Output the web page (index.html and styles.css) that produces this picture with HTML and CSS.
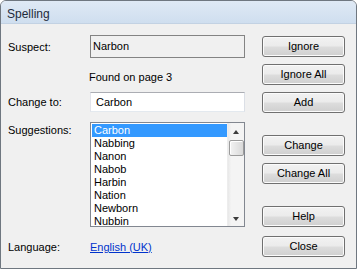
FILE: index.html
```html
<!DOCTYPE html>
<html>
<head>
<meta charset="utf-8">
<link rel="stylesheet" href="styles.css">
</head>
<body>
<div class="window">
  <div class="titlebar">Spelling</div>
  <div class="client">
    <div class="left">
      <div class="row row-suspect">
        <span class="label">Suspect:</span>
        <div class="static">Narbon</div>
      </div>
      <div class="row row-found">Found on page 3</div>
      <div class="row row-change">
        <span class="label">Change to:</span>
        <div class="input">Carbon</div>
      </div>
      <div class="row row-sugg">
        <span class="label label-top">Suggestions:</span>
        <div class="listbox">
          <ul class="items">
            <li class="sel">Carbon</li>
            <li>Nabbing</li>
            <li>Nanon</li>
            <li>Nabob</li>
            <li>Harbin</li>
            <li>Nation</li>
            <li>Newborn</li>
            <li>Nubbin</li>
          </ul>
          <div class="scrollbar">
            <div class="arrow up"></div>
            <div class="thumb"></div>
            <div class="track"></div>
            <div class="arrow down"></div>
          </div>
        </div>
      </div>
      <div class="row row-lang">
        <span class="label">Language:</span>
        <a class="link" href="#">English (UK)</a>
      </div>
    </div>
    <div class="right">
      <div class="btn b-ignore">Ignore</div>
      <div class="btn b-ignoreall">Ignore All</div>
      <div class="btn b-add">Add</div>
      <div class="btn b-change">Change</div>
      <div class="btn b-changeall">Change All</div>
      <div class="btn b-help">Help</div>
      <div class="btn b-close">Close</div>
    </div>
  </div>
</div>
</body>
</html>
```
FILE: styles.css
```css
* { box-sizing: border-box; }
html, body { margin: 0; padding: 0; background: #ffffff; }
body { width: 357px; height: 269px; overflow: hidden; }

.window {
  width: 357px;
  height: 269px;
  border: 1px solid #6f7780;
  border-radius: 6px 6px 0 0;
  background: #f0f0f0;
  overflow: hidden;
  font-family: "Liberation Sans", Arial, sans-serif;
  font-size: 11px;
  color: #000;
}

.titlebar {
  height: 23px;
  padding: 5px 0 0 6px;
  line-height: 16px;
  font-size: 12px;
  color: #1e2b3b;
  background: linear-gradient(#dfe9f5, #cfdeef);
  border-bottom: 1px solid #c3d2e3;
}

.client {
  display: flex;
  padding: 11px 0 0 7px;
}

.left { width: 238px; display: flex; flex-direction: column; }
.right { width: 83px; margin-left: 16px; padding-top: 1px; display: flex; flex-direction: column; }

.row { display: flex; align-items: center; }
.label { width: 82px; flex: none; line-height: 14px; }
.label-top { align-self: flex-start; padding-top: 1px; }

.row-suspect { height: 23px; }
.static {
  width: 155px; height: 23px;
  border: 1px solid #838383;
  padding-left: 2px;
  line-height: 21px;
}

.row-found { margin-top: 12px; height: 14px; line-height: 14px; padding-left: 81px; }

.row-change { margin-top: 8px; height: 20px; }
.input {
  width: 155px; height: 20px;
  background: #fff;
  border: 1px solid;
  border-color: #abadb3 #dbdfe6 #e3e9ef #e2e3ea;
  padding-left: 5px;
  line-height: 18px;
}

.row-sugg { margin-top: 10px; align-items: flex-start; }
.listbox {
  width: 155px; height: 105px;
  background: #fff;
  border: 1px solid #828790;
  display: flex;
  padding: 1px 0 0 1px;
}
.items { list-style: none; margin: 0; padding: 0; width: 135px; }
.items li { height: 13px; line-height: 13px; padding-left: 2px; }
.items li.sel { background: #3399ff; color: #fff; }

.scrollbar {
  margin-left: auto;
  margin-top: -1px;
  width: 17px; height: 103px;
  background: linear-gradient(to right, #e8e8e8, #f4f4f4 20%, #f4f4f4);
  border-left: 1px solid #ededed;
  display: flex; flex-direction: column; align-items: center;
}
.arrow { height: 17px; width: 17px; flex: none; position: relative; }
.arrow::after {
  content: ""; position: absolute; left: 5px;
  border-left: 3.5px solid transparent; border-right: 3.5px solid transparent;
}
.arrow.up::after { top: 7px; border-bottom: 4px solid #3c3c3c; }
.arrow.down::after { top: 8px; border-top: 4px solid #3c3c3c; }
.thumb {
  width: 15px; height: 16px; flex: none;
  border: 1px solid #9b9b9b; border-radius: 2px;
  background: linear-gradient(to right, #f3f3f3, #e6e6e6 50%, #d9d9d9);
  box-shadow: inset 1px 1px 0 #fff;
}
.track { flex: 1; }

.row-lang { margin-top: 13px; height: 14px; }
.link { color: #0033cc; text-decoration: underline; line-height: 14px; }

.btn {
  height: 21px; width: 83px;
  border: 1px solid #707070;
  border-radius: 3px;
  background: linear-gradient(#f2f2f2 0%, #ebebeb 48%, #dddddd 52%, #cfcfcf 100%);
  box-shadow: inset 0 0 0 1px #fbfbfb;
  text-align: center;
  line-height: 19px;
  flex: none;
}
.b-ignoreall, .b-add, .b-changeall { margin-top: 7px; }
.b-change { margin-top: 22px; }
.b-help { margin-top: 22px; }
.b-close { margin-top: 9px; }
```
